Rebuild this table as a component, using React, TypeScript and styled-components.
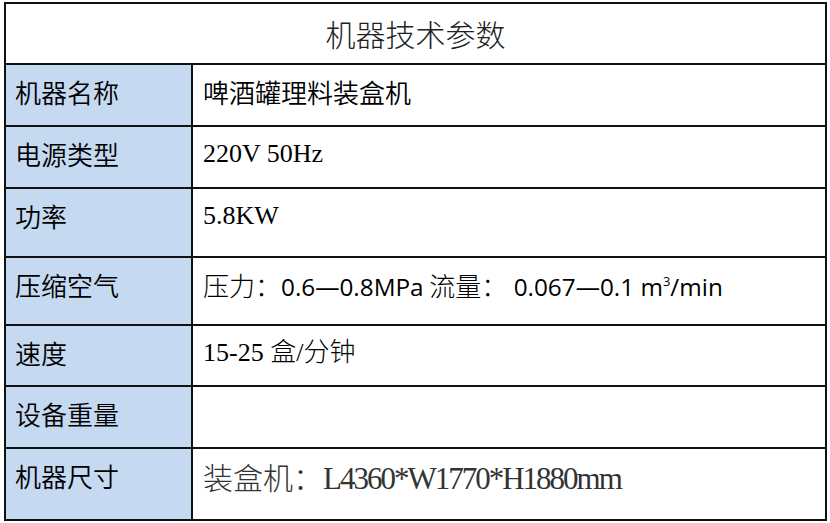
import React from "react";
import styled, { createGlobalStyle } from "styled-components";

const cjk = `"Noto Sans CJK SC", "Noto Sans", sans-serif`;
const serif = `"Liberation Serif", "Noto Sans CJK SC", serif`;

const GlobalStyle = createGlobalStyle`
  html, body {
    margin: 0;
    padding: 0;
    background: #ffffff;
  }
  * {
    box-sizing: border-box;
  }
`;

type RowData = {
    label: string;
    height: number;
    value: React.ReactNode;
};

const App: React.FC = () => {
    // built here so the styled parts below already exist
    const rows: RowData[] = [
        { label: "机器名称", height: 62, value: <PlainText>啤酒罐理料装盒机</PlainText> },
        { label: "电源类型", height: 62, value: <SerifText>220V 50Hz</SerifText> },
        { label: "功率", height: 69, value: <SerifText>5.8KW</SerifText> },
        {
            label: "压缩空气",
            height: 68,
            value: <MixedText>
                压力：<Latin>0.6—0.8MPa</Latin> 流量：<Latin>&nbsp;0.067—0.1 m<Sup>3</Sup>/min</Latin>
            </MixedText>
        },
        { label: "速度", height: 61, value: <SerifText>15-25 盒/分钟</SerifText> },
        { label: "设备重量", height: 62, value: null },
        {
            label: "机器尺寸",
            height: 72,
            value: <LargeText>装盒机：<Narrow>L4360*W1770*H1880mm</Narrow></LargeText>
        },
    ];

    return <Page>
        <GlobalStyle/>
        <Sheet rowHeights={ [61, ...rows.map(r => r.height)] }>
            <TitleCell>机器技术参数</TitleCell>
            { rows.map(row => <React.Fragment key={ row.label }>
                <LabelCell>{ row.label }</LabelCell>
                <ValueCell>{ row.value }</ValueCell>
            </React.Fragment>) }
        </Sheet>
    </Page>
}

export default App;

const Page = styled.div`
  width: 830px;
  height: 523px;
  padding: 2px 0 0 4px;
  background: #ffffff;
`;

const Sheet = styled.div<{ rowHeights: number[] }>`
  width: 823px;
  display: grid;
  grid-template-columns: 187px 1fr;
  grid-template-rows: ${ props => props.rowHeights.map(h => `${ h }px`).join(" ") };
  border-top: 2px solid #111;
  border-left: 2px solid #111;
`;

const Cell = styled.div`
  display: flex;
  align-items: flex-start;
  border-right: 2px solid #111;
  border-bottom: 2px solid #111;
  padding: 9px 0 0 9px;
  line-height: 36px;
  color: #000;
  white-space: nowrap;
`;

const TitleCell = styled(Cell)`
  grid-column: 1 / span 2;
  align-items: center;
  justify-content: center;
  padding: 0 0 2px 0;
  font-family: ${ cjk };
  font-size: 30px;
  font-weight: 300;
  color: #222;
`;

const LabelCell = styled(Cell)`
  background: #c5d9f1;
  font-family: ${ cjk };
  font-size: 26px;
  font-weight: 350;
`;

const ValueCell = styled(Cell)`
  padding-left: 10px;
`;

const PlainText = styled.span`
  font-family: ${ cjk };
  font-size: 26px;
  font-weight: 350;
`;

const SerifText = styled.span`
  font-family: ${ serif };
  font-size: 26px;
  font-weight: 300;
`;

const MixedText = styled.span`
  font-family: ${ cjk };
  font-size: 26px;
  font-weight: 300;
`;

const Latin = styled.span`
  font-family: "Open Sans", "Liberation Sans", sans-serif;
  font-size: 24.3px;
  font-weight: 400;
`;

const Sup = styled.sup`
  font-size: 13px;
  vertical-align: 10px;
  line-height: 0;
`;

const LargeText = styled.span`
  font-family: ${ cjk };
  font-size: 30px;
  font-weight: 300;
  color: #333;
`;

const Narrow = styled.span`
  font-family: ${ serif };
  font-size: 31px;
  letter-spacing: -2px;
`;
